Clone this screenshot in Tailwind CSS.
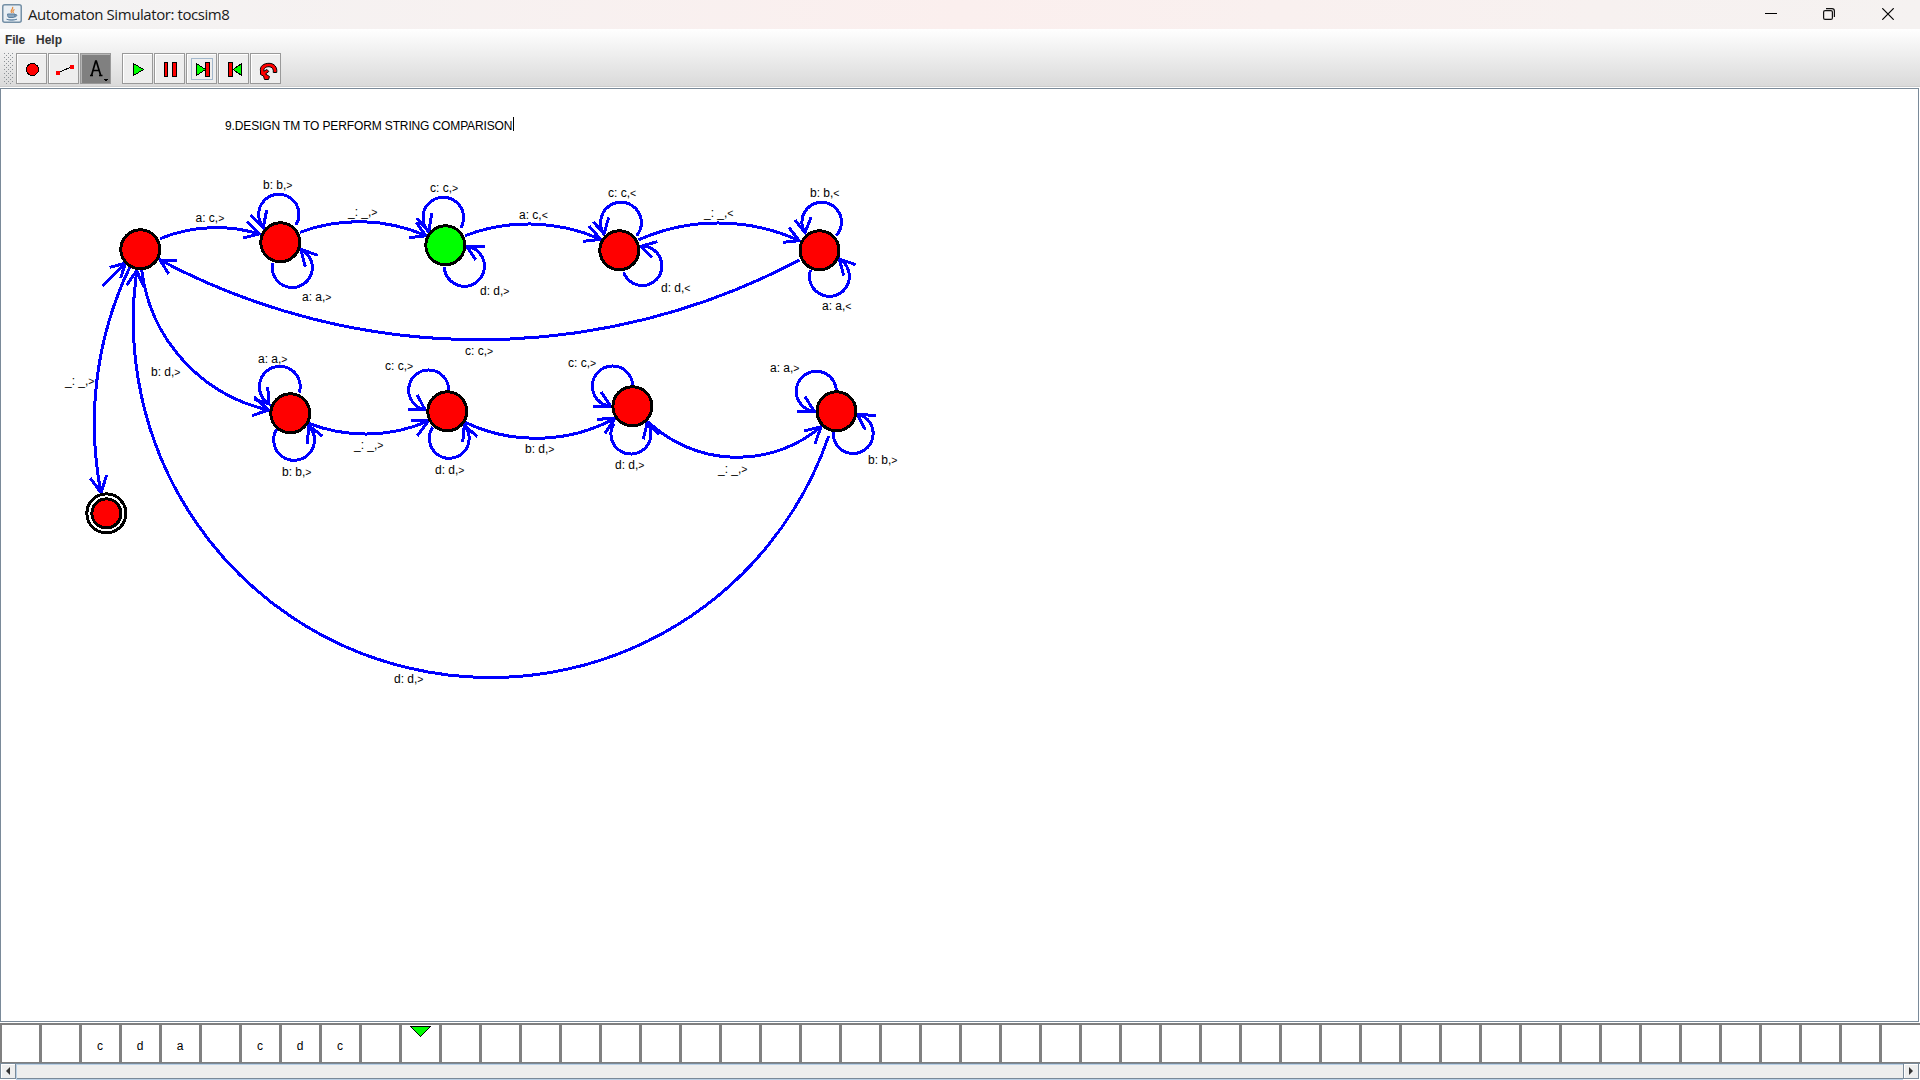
<!DOCTYPE html>
<html lang="en">
<head>
<meta charset="utf-8">
<title>Automaton Simulator: tocsim8</title>
<script src="https://cdn.jsdelivr.net/npm/@tailwindcss/browser@4"></script>
</head>
<body class="w-[1920px] h-[1080px] overflow-hidden flex flex-col bg-white font-['Liberation_Sans',sans-serif] text-black">
<header class="h-[29px] shrink-0 flex items-center bg-linear-to-r from-[#f3f3f3] via-[#fbefee] to-[#f5f2f1] pl-0.5">
  <svg class="w-5 h-[19px] shrink-0 -mt-0.5" viewBox="0 0 20 19">
    <rect x=".75" y=".75" width="18.5" height="17.5" rx="2" fill="#e9eff4" stroke="#7590a6" stroke-width="1.5"/>
    <path d="M10.5 3c1.5 2-3 3-1 6M12.5 5.5c-2 1-2 2-1 3.500" fill="none" stroke="#e58a3c" stroke-width="1.3"/>
    <path d="M5.500 10h7.500c0 2-.5 3.500-1.500 3.500h-4.500c-1 0-1.500-1.500-1.500-3.500zM13 10.500c3-.5 2 2.500-.8 2.500M4.500 15.200c3 1.300 7 1.300 10.500 0" fill="#8aa5bd" stroke="#5d80a0"/>
  </svg>
  <h1 class="ml-1.5 -mt-px text-[15px] tracking-[-0.42px] whitespace-nowrap font-['Open_Sans',sans-serif] text-[#1a1a1a]">Automaton Simulator: tocsim8</h1>
  <div class="ml-auto flex items-center mr-[26px] -mt-px">
    <svg class="w-3 h-3" viewBox="0 0 12 12"><path d="M0 5.500h12" stroke="#000"/></svg>
    <svg class="w-3 h-3 ml-[46px]" viewBox="0 0 12 12" fill="none" stroke="#111" stroke-width="1.200"><rect x=".6" y="2.600" width="8.800" height="8.800" rx="1.500"/><path d="M3 .6h6q2.400 0 2.400 2.400v6"/></svg>
    <svg class="w-3 h-3 ml-[47px]" viewBox="0 0 12 12"><path d="M.3.3l11.400 11.400M11.700.3L.3 11.700" stroke="#000" stroke-width="1.200"/></svg>
  </div>
</header>
<div class="h-[58px] shrink-0 bg-linear-to-b from-white to-[#dadada] border-b border-[#ccc]">
  <nav class="h-6 flex gap-3 pl-[5px] pt-[4px] text-[12px] leading-[14px] font-bold text-[#333]"><span class="w-[19px] tracking-[-0.2px]">File</span><span>Help</span></nav>
  <div class="flex h-[31px]">
    <svg class="w-4 h-8 shrink-0"><defs><pattern id="grip" width="4" height="4" patternUnits="userSpaceOnUse"><path d="M0 0h1v1H0zM2 2h1v1H2z" fill="#8c9196"/></pattern></defs><rect x="3" y="0" width="10" height="31" fill="url(#grip)"/></svg>
    <div class="flex gap-px">
      <button class="size-[31px] border border-[#999] bg-[#eee] shadow-[inset_1px_1px_0_#fff]"><svg class="size-[29px]" viewBox="0 0 29 29" shape-rendering="crispEdges"><circle cx="15.500" cy="15.500" r="6" fill="red" stroke="#000"/></svg></button>
      <button class="size-[31px] border border-[#999] bg-[#eee] shadow-[inset_1px_1px_0_#fff]"><svg class="size-[29px]" viewBox="0 0 29 29" shape-rendering="crispEdges"><path d="M9 18.500L22.500 13" stroke="#000"/><path d="M7 17h4v4H7zM21 11h4v4h-4z" fill="red"/></svg></button>
      <button class="size-[31px] border border-[#999] bg-[#808080] shadow-[inset_1px_1px_0_#b5b5b5]"><svg class="size-[29px]" viewBox="0 0 29 29"><path d="M9 21.500h3M18 21.500h3.500M10.500 21.500L14.700 7h.6l4.400 14.500M12 16.500h6.500" stroke="#000" stroke-width="1.700" fill="none"/><path d="M22 24.500h6l-3 3z" shape-rendering="crispEdges"/></svg></button>
    </div>
    <div class="flex gap-px ml-[11px]">
      <button class="size-[31px] border border-[#999] bg-[#eee] shadow-[inset_1px_1px_0_#fff]"><svg class="size-[29px]" viewBox="0 0 29 29" shape-rendering="crispEdges"><path d="M10.500 9.500v12l10-6z" fill="#0f0" stroke="#000"/></svg></button>
      <button class="size-[31px] border border-[#999] bg-[#eee] shadow-[inset_1px_1px_0_#fff]"><svg class="size-[29px]" viewBox="0 0 29 29" shape-rendering="crispEdges"><path d="M9.500 8.500h3v14h-3zM17.500 8.500h4v14h-4z" fill="red" stroke="#000"/></svg></button>
      <button class="size-[31px] border border-[#999] bg-[#eee] shadow-[inset_1px_1px_0_#fff]"><svg class="size-[29px]" viewBox="0 0 29 29" shape-rendering="crispEdges"><path d="M4.500 4.500h21v21h-21z" fill="none" stroke="#a3b8cc"/><path d="M9.500 9.500v12l9-6z" fill="#0f0" stroke="#000"/><path d="M18.500 8.500h4v14h-4z" fill="red" stroke="#000"/></svg></button>
      <button class="size-[31px] border border-[#999] bg-[#eee] shadow-[inset_1px_1px_0_#fff]"><svg class="size-[29px]" viewBox="0 0 29 29" shape-rendering="crispEdges"><path d="M9.500 8.500h4v14h-4z" fill="red" stroke="#000"/><path d="M22.500 9.500v12l-8.500-6z" fill="#0f0" stroke="#000"/></svg></button>
      <button class="size-[31px] border border-[#999] bg-[#eee] shadow-[inset_1px_1px_0_#fff]"><svg class="size-[29px]" viewBox="0 0 29 29"><path d="M9.500 17C8.500 12 13 9.300 18 9.300C23.500 9.300 26.500 13.500 25.700 18.500H22.300C22.800 15 21 12.700 18 12.700C14.500 12.700 12.500 14.500 12.800 17.200L16 15.500L17.800 17.500L14.500 20L18.500 22.500L17.500 25.500H13.500L12.500 22L9.500 20.500z" fill="red" stroke="#000"/></svg></button>
    </div>
  </div>
</div>
<main class="h-[934px] shrink-0 border border-[#7a8a99] mt-px mr-px bg-white">
  <svg class="block w-[1917px] h-[932px]" viewBox="1 89 1917 932">
    <g id="edges" fill="none" stroke="#00f" stroke-width="3" shape-rendering="crispEdges"></g>
    <g id="states" stroke="#000" stroke-width="3" shape-rendering="crispEdges"></g>
    <g id="labels" font-size="12"></g>
    <text x="225" y="130" font-size="12" textLength="287.500" lengthAdjust="spacing">9.DESIGN TM TO PERFORM STRING COMPARISON</text>
    <path d="M513.500 117v14" stroke="#000" shape-rendering="crispEdges"/>
  </svg>
</main>
<section class="h-[40px] mt-px shrink-0 flex border-t-2 border-b border-[#808080] overflow-hidden" id="tape"></section>
<footer class="h-[17px] shrink-0 flex border-t border-[#7a8a99]">
  <div class="w-4 flex items-center justify-center border-l border-r border-b border-[#7a8a99] bg-[#eee] mb-px shadow-[inset_1px_1px_0_#fff]"><svg class="w-2 h-2" viewBox="0 0 8 8"><path d="M6 0v8L2 4z" fill="#333"/></svg></div>
  <div class="flex-1 border-t border-b border-l border-[#b8cfe5] bg-[#eee]"><div class="h-full border-b border-[#7a8a99]"></div></div>
  <div class="w-4 mr-px flex items-center justify-center border-l border-r border-b border-[#7a8a99] bg-[#eee] mb-px shadow-[inset_1px_1px_0_#fff]"><svg class="w-2 h-2" viewBox="0 0 8 8"><path d="M2 0v8l4-4z" fill="#333"/></svg></div>
</footer>
<script>
// Each edge: start, point on the arc, tip, then the two arrowhead barbs.
const edges = [
 [160,238.7, 209,227.8, 259.3,234, 247.3,221.7, 243.3,238],
 [296,225, 279,194.3, 263.3,227.3, 266.7,210, 250.7,215.3],
 [272.7,263.3, 291.8,287.5, 300.7,249.3, 317.7,255.3, 305.3,266.7],
 [300,232.3, 358.3,221.7, 426,235.7, 409.3,237.7, 416,222.3],
 [460.7,228, 444,197.3, 428.7,231.7, 432,212.7, 416.7,218.3],
 [444.3,266.7, 464.3,286.3, 466.7,246.3, 484.7,246.3, 475.7,260],
 [465,235.7, 526.7,224, 600.7,239.3, 583.3,241.3, 589,226],
 [636.7,235.7, 620,202.3, 604,234, 608.7,217.3, 593.3,221.7],
 [623.7,272.3, 643.5,285.5, 640.7,246.3, 657.3,241.7, 652.3,257.7],
 [638.3,240, 718.3,223, 799.3,240.7, 783.3,242.3, 789,227.7],
 [836,235.7, 822,202.3, 805,232.7, 811,217.3, 795,220],
 [810.5,270, 830.5,296.3, 839.3,259, 855.7,264.7, 843.7,275.7],
 [799.3,260, 480,339.7, 160,260, 176.7,260.3, 168.7,274],
 [130,266.7, 94.3,423.3, 101,492.7, 90.3,478.3, 106.7,475],
 [828.7,436, 490,677.5, 136.7,270.7, 126.7,285, 143.7,286.7],
 [141.7,270, 198.3,375, 268.3,410, 252,415.7, 254.3,396.7],
 [299.3,392.7, 280,366.3, 269,404, 267.7,386.7, 254,399.3],
 [276.7,429.3, 294,460.3, 308.7,425.7, 307.3,444, 322.3,436],
 [308.7,423.3, 368.3,434, 428.3,421, 411.3,420, 417.3,435.7],
 [448.7,390.7, 428.3,370, 425,409.7, 408.3,409.7, 417.3,395],
 [432.7,427.3, 449.3,458.3, 464.3,425.3, 462.7,442.3, 477.3,436.7],
 [465,422.3, 536.7,438.3, 615,418.3, 597.3,419.3, 605,433.3],
 [632.7,385, 612,366, 610.7,406.3, 593.3,406.3, 601.3,392],
 [614,423.3, 630,454, 647.3,422.3, 643.3,439.3, 659.3,434.3],
 [648.3,422, 735,457.3, 821,426.7, 804,431, 815,443.7],
 [836.3,390, 816,371.3, 814.3,411.3, 797.3,411.3, 805,396.7],
 [833.3,431.7, 852.2,453.5, 857.3,414, 876,415.7, 865.3,429.7]
];
// Circular arc through three points.
function arc(x1, y1, x2, y2, x3, y3) {
  const a = Math.hypot(x2-x3, y2-y3), b = Math.hypot(x1-x3, y1-y3), c = Math.hypot(x1-x2, y1-y2);
  const cross = (x2-x1)*(y3-y1) - (y2-y1)*(x3-x1);
  const r = a*b*c / (2*Math.abs(cross));
  const large = (x1-x2)*(x3-x2) + (y1-y2)*(y3-y2) > 0 ? 1 : 0;
  return `M${x1} ${y1}A${r} ${r} 0 ${large} ${cross > 0 ? 1 : 0} ${x3} ${y3}`;
}
let d = '<path d="M102.300 286L125.300 263.300M109.700 267.300L125.300 263.300L120.700 278"/>';
for (const e of edges) {
  const [x1,y1,x2,y2,x3,y3,p,q,s,t] = e;
  d += `<path d="${arc(x1,y1,x2,y2,x3,y3)}M${p} ${q}L${x3} ${y3}L${s} ${t}"/>`;
}
document.getElementById('edges').innerHTML = d;

const states = [[140.3,249.3],[280.3,242.3],[445.3,245.3,'#0f0'],[619.3,250.3],[819.5,250.3],[290.3,413.3],[447.3,411.3],[632.4,406.3],[836.5,411.3]];
let s = states.map(([x,y,c]) => `<circle cx="${x}" cy="${y}" r="19.500" fill="${c || 'red'}"/>`).join('');
s += '<circle cx="106.400" cy="513.400" r="19.500" fill="#fff"/><circle cx="106.400" cy="513.400" r="14.500" fill="red"/>';
document.getElementById('states').innerHTML = s;

const labels = [
 [195.5,222,'a: c,>'],[263,189,'b: b,>'],[302,301,'a: a,>'],[151,376,'b: d,>'],[65,385,'_: _,>'],[258,363,'a: a,>'],
 [348,216,'_: _,>'],[430,192,'c: c,>'],[519,219,'a: c,<'],[608,197,'c: c,<'],[480,295,'d: d,>'],[465,355,'c: c,>'],
 [704,217,'_: _,<'],[810,197,'b: b,<'],[661,292,'d: d,<'],[822,310,'a: a,<'],[385,370,'c: c,>'],[568,367,'c: c,>'],
 [354,449,'_: _,>'],[525,453,'b: d,>'],[435,474,'d: d,>'],[615,469,'d: d,>'],[770,372,'a: a,>'],[718,473,'_: _,>'],
 [868,464,'b: b,>'],[282,476,'b: b,>'],[394,683,'d: d,>']
];
document.getElementById('labels').innerHTML = labels.map(([x,y,t]) => {
  const sign = t.slice(-1) === '>' ? '&gt;' : '&lt;';
  return `<text x="${x}" y="${y}">${t.slice(0,-1)}<tspan font-size="10.500">${sign}</tspan></text>`;
}).join('');

const symbols = {2:'c', 3:'d', 4:'a', 6:'c', 7:'d', 8:'c'};
let cells = '';
for (let i = 0; i < 48; i++) {
  const head = i === 10 ? '<svg class="absolute left-[8px] top-px w-[22px] h-[11px]" viewBox="0 0 22 11" shape-rendering="crispEdges"><path d="M.5.5h20L10.500 10.500z" fill="#0f0" stroke="#000"/></svg>' : '';
  const edge = i === 0 ? 'w-[39px] border-l-2' : i === 47 ? 'w-[41px] border-l-3' : 'w-10 border-l-3';
  cells += `<div class="${edge} relative shrink-0 border-[#808080] text-[12px] leading-[42px] text-center pr-px">${symbols[i] || ''}${head}</div>`;
}
document.getElementById('tape').innerHTML = cells;
</script>
</body>
</html>
